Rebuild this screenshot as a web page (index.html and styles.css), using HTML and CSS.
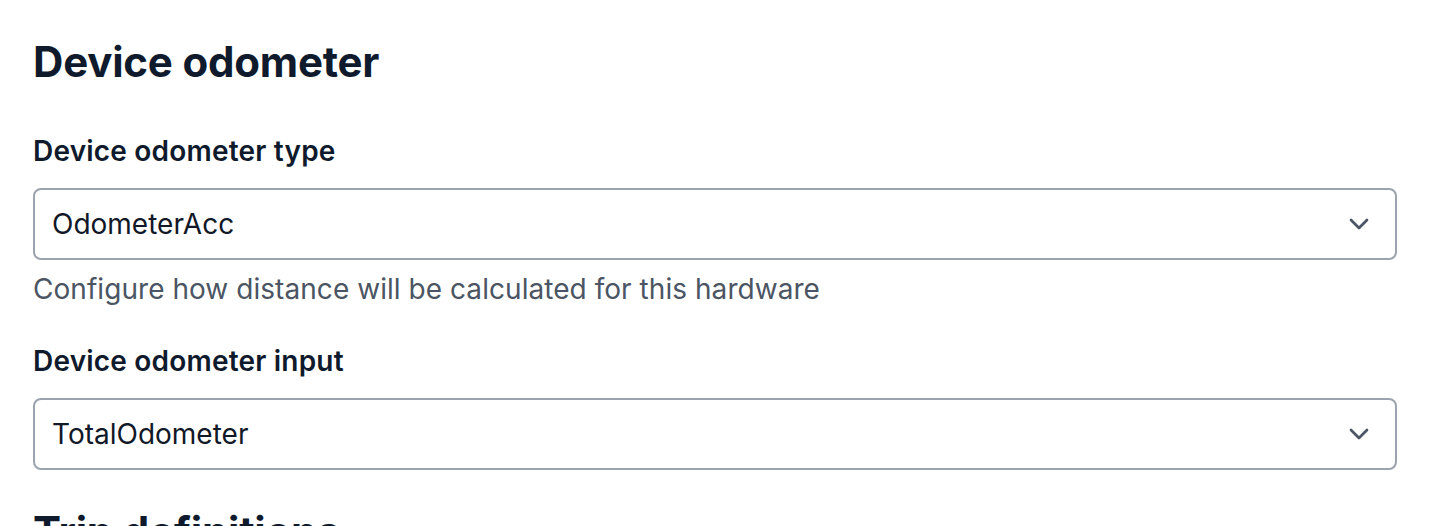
FILE: index.html
```html
<!DOCTYPE html>
<html lang="en">
<head>
<meta charset="UTF-8">
<meta name="viewport" content="width=device-width, initial-scale=1.0">
<title>Device odometer</title>
<link rel="stylesheet" href="styles.css">
</head>
<body>

<section class="settings">
    <h1 class="section-title">Device odometer</h1>

    <div class="field">
        <label class="field-label" for="odoType">Device odometer type</label>
        <div class="select-box" id="odoType">
            <span class="select-value">OdometerAcc</span>
            <svg class="chevron" viewBox="0 0 24 24" fill="none">
                <path d="M6 9l6 6 6-6" stroke="#4b5563" stroke-width="2" stroke-linecap="round" stroke-linejoin="round"/>
            </svg>
        </div>
        <p class="field-help">Configure how distance will be calculated for this hardware</p>
    </div>

    <div class="field">
        <label class="field-label" for="odoInput">Device odometer input</label>
        <div class="select-box" id="odoInput">
            <span class="select-value">TotalOdometer</span>
            <svg class="chevron" viewBox="0 0 24 24" fill="none">
                <path d="M6 9l6 6 6-6" stroke="#4b5563" stroke-width="2" stroke-linecap="round" stroke-linejoin="round"/>
            </svg>
        </div>
    </div>

    <h1 class="section-title next">Trip definitions</h1>
</section>

</body>
</html>
```

FILE: styles.css
```css
/* Settings page */
body {
    margin: 0;
    padding: 0;
    font-family: Inter, "Noto Sans", sans-serif;
    background-color: #fff;
    color: #0f1b2d;
}
.settings {
    padding: 36px 33px 0 33px;
}
.section-title {
    font-size: 42px;
    font-weight: 700;
    line-height: 52px;
    letter-spacing: -0.2px;
    margin: 0 0 45px 0;
    color: #0f1b2d;
}
.section-title.next {
    margin-top: 36px;
}
.field {
    margin-bottom: 34px;
}
.field-label {
    display: block;
    font-size: 28px;
    font-weight: 600;
    line-height: 36px;
    letter-spacing: 0.2px;
    margin-bottom: 19px;
}
.select-box {
    box-sizing: border-box;
    display: flex;
    align-items: center;
    justify-content: space-between;
    height: 72px;
    padding: 0 20px 0 17px;
    border: 2px solid #9ca3af;
    border-radius: 8px;
}
.select-value {
    font-size: 28px;
    color: #111827;
}
.chevron {
    width: 32px;
    height: 32px;
}
.field-help {
    margin: 9px 0 0 0;
    font-size: 28px;
    line-height: 40px;
    letter-spacing: 0.05px;
    color: #4b5563;
}
```
